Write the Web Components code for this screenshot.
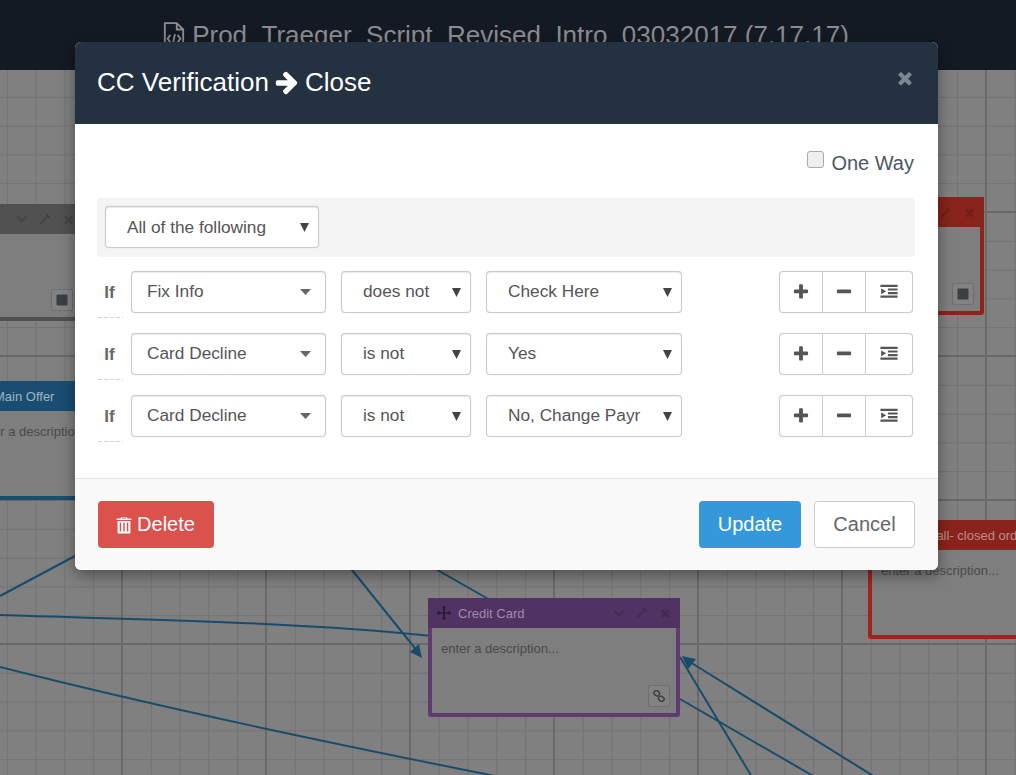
<!DOCTYPE html>
<html>
<head>
<meta charset="utf-8">
<title>Flow editor</title>
<style>
  html, body { margin: 0; height: 100%; overflow: hidden; }
  body { font-family: "Liberation Sans", Arial, sans-serif; }
</style>
</head>
<body>
<flow-app></flow-app>
<script>
const ICONS = {
  plus: 'M1600 736v192q0 40-28 68t-68 28h-416v416q0 40-28 68t-68 28h-192q-40 0-68-28t-28-68v-416h-416q-40 0-68-28t-28-68v-192q0-40 28-68t68-28h416v-416q0-40 28-68t68-28h192q40 0 68 28t28 68v416h416q40 0 68 28t28 68z',
  minus: 'M1600 736v192q0 40-28 68t-68 28h-1216q-40 0-68-28t-28-68v-192q0-40 28-68t68-28h1216q40 0 68 28t28 68z',
  times: 'M1490 1322q0 40-28 68l-136 136q-28 28-68 28t-68-28l-294-294-294 294q-28 28-68 28t-68-28l-136-136q-28-28-28-68t28-68l294-294-294-294q-28-28-28-68t28-68l136-136q28-28 68-28t68 28l294 294 294-294q28-28 68-28t68 28l136 136q28 28 28 68t-28 68l-294 294 294 294q28 28 28 68z',
  arrow: 'M1600 960q0 54-37 91l-651 651q-39 37-91 37-51 0-90-37l-75-75q-38-38-38-91t38-91l293-293h-704q-52 0-84.5-37.5t-32.5-90.5v-128q0-53 32.5-90.5t84.5-37.5h704l-293-294q-38-36-38-90t38-90l75-75q38-38 90-38 53 0 91 38l651 651q37 35 37 90z',
  indent: 'M128 256h1536v192H128zM800 576h864v192H800zM800 896h864v192H800zM128 1216h1536v192H128zM192 576l448 256-448 256z',
  trash: 'M640 192h512l64 128h320q32 0 32 32v96H224v-96q0-32 32-32h320zM736 256l-32 64h384l-32-64zM320 544h1152v1024q0 96-96 96H416q-96 0-96-96zM512 672v800h128V672zM832 672v800h128V672zM1152 672v800h128V672z',
  move: 'M896 64l256 288H992v448h448V640l288 256-288 256V992H992v448h160l-256 288-256-288h160V992H352v160L64 896l288-256v160h448V352H640z'
};

function icon(name, size, color) {
  return `<svg width="${size}" height="${size}" viewBox="0 0 1792 1792" fill="${color}" aria-hidden="true"><path d="${ICONS[name]}"/></svg>`;
}

class FlowSelect extends HTMLElement {
  connectedCallback() {
    const wide = this.hasAttribute('wide');
    this.attachShadow({ mode: 'open' }).innerHTML = `
      <style>
        :host {
          display: flex;
          box-sizing: border-box;
          height: 42px;
          align-items: center;
          background: #fff;
          border: 1px solid #ccc;
          border-radius: 4px;
          box-shadow: inset 0 1px 1px rgba(0,0,0,.08), 0 0 1px rgba(0,0,0,.2);
          color: #555;
          font-size: 17.25px;
          padding-left: ${wide ? 15 : 21}px;
          padding-right: ${wide ? 14 : 9}px;
        }
        .text { flex: 1; white-space: nowrap; overflow: hidden; padding-bottom: var(--lift, 2px); }
        .caret { flex: none; display: block; }
      </style>
      <span class="text"><slot></slot></span>
      ${wide
        ? '<svg class="caret" width="11" height="6" viewBox="0 0 11 6"><path d="M0 0h11L5.5 6z" fill="#666"/></svg>'
        : '<svg class="caret" width="9" height="9" viewBox="0 0 9 9"><path d="M0 0h9L4.5 9z" fill="#444"/></svg>'}
    `;
  }
}

class RuleActions extends HTMLElement {
  connectedCallback() {
    this.attachShadow({ mode: 'open' }).innerHTML = `
      <style>
        :host {
          display: flex;
          box-sizing: border-box;
          height: 42px;
          width: 134px;
          background: #fff;
          border: 1px solid #ccc;
          border-radius: 4px;
          box-shadow: 0 0 1px rgba(0,0,0,.2);
        }
        button {
          all: unset;
          display: flex;
          align-items: center;
          justify-content: center;
          box-sizing: border-box;
          width: 43px;
          border-right: 1px solid #ccc;
        }
        button:first-child { width: 43px; }
        button:last-child { border-right: 0; flex: 1; }
      </style>
      <button>${icon('plus', 18, '#555')}</button>
      <button>${icon('minus', 18, '#555')}</button>
      <button>${icon('indent', 20, '#555')}</button>
    `;
  }
}

class RuleRow extends HTMLElement {
  connectedCallback() {
    this.attachShadow({ mode: 'open' }).innerHTML = `
      <style>
        :host { display: flex; align-items: flex-start; height: 42px; }
        .if {
          flex: none;
          box-sizing: border-box;
          width: 25px;
          height: 47px;
          margin-left: 1px;
          margin-right: 8px;
          padding-top: 12px;
          padding-right: 2px;
          text-align: center;
          font-weight: bold;
          font-size: 17px;
          color: #666;
          background: repeating-linear-gradient(90deg, #d4d4d4 0 4px, transparent 4px 6px) left bottom / 100% 1px no-repeat;
        }
        .subject { width: 195px; }
        .op { width: 130px; margin-left: 15px; }
        .value { width: 196px; margin-left: 15px; }
        rule-actions { margin-left: auto; margin-right: 2px; }
      </style>
      <div class="if">If</div>
      <flow-select class="subject" wide>${this.getAttribute('subject')}</flow-select>
      <flow-select class="op">${this.getAttribute('op')}</flow-select>
      <flow-select class="value">${this.getAttribute('value')}</flow-select>
      <rule-actions></rule-actions>
    `;
  }
}

class RuleModal extends HTMLElement {
  connectedCallback() {
    this.attachShadow({ mode: 'open' }).innerHTML = `
      <style>
        :host {
          position: absolute;
          left: 75px;
          top: 42px;
          width: 863px;
          background: #fff;
          border-radius: 6px;
          box-shadow: 0 5px 15px rgba(0,0,0,.4);
          overflow: hidden;
        }
        header {
          display: flex;
          justify-content: space-between;
          height: 82px;
          box-sizing: border-box;
          padding: 0 23px 0 22px;
          background: #233141;
          color: #fff;
        }
        h4 {
          display: flex;
          align-items: center;
          gap: 5px;
          margin: 0;
          padding-bottom: 2px;
          font-size: 26px;
          font-weight: normal;
        }
        .close { margin-top: 26px; }
        .body { box-sizing: border-box; height: 354px; padding: 26px 23px 0 22px; }
        .oneway {
          display: flex;
          justify-content: flex-end;
          align-items: flex-start;
          gap: 7px;
          height: 48px;
          padding-right: 1px;
          font-size: 20px;
          color: #4d5766;
        }
        .oneway i {
          display: block;
          width: 15px;
          height: 15px;
          margin-top: 1px;
          border: 1px solid #aaa;
          border-radius: 3px;
          background: #efefef;
        }
        .oneway span { margin-top: 2px; }
        .band { background: #f4f4f4; border-radius: 4px; padding: 8px 8px 9px; margin-bottom: 14px; }
        .band flow-select { width: 214px; --lift: 0; }
        rule-row { margin-bottom: 20px; }
        footer {
          display: flex;
          align-items: center;
          box-sizing: border-box;
          height: 92px;
          padding: 0 23px;
          background: #f9f9f9;
          border-top: 1px solid #e3e3e3;
        }
        button {
          all: unset;
          display: flex;
          align-items: center;
          justify-content: center;
          gap: 3px;
          box-sizing: border-box;
          height: 47px;
          border-radius: 4px;
          font-size: 20px;
        }
        .delete { width: 116px; padding-right: 3px; background: #db524d; color: #fff; }
        .update { width: 102px; margin-left: auto; background: #3498db; color: #fff; }
        .cancel { width: 101px; margin-left: 13px; background: #fff; color: #666; border: 1px solid #ccc; }
      </style>
      <header>
        <h4>CC Verification ${icon('arrow', 26, '#fff')} Close</h4>
        <div class="close">${icon('times', 20, '#7b8692')}</div>
      </header>
      <div class="body">
        <div class="oneway"><i></i><span>One Way</span></div>
        <div class="band"><flow-select>All of the following</flow-select></div>
        <rule-row subject="Fix Info" op="does not" value="Check Here"></rule-row>
        <rule-row subject="Card Decline" op="is not" value="Yes"></rule-row>
        <rule-row subject="Card Decline" op="is not" value="No, Change Payr"></rule-row>
      </div>
      <footer>
        <button class="delete">${icon('trash', 20, '#fff')}Delete</button>
        <button class="update">Update</button>
        <button class="cancel">Cancel</button>
      </footer>
    `;
  }
}

// colours on the canvas are the dimmed ones, as seen behind the modal
class FlowNode extends HTMLElement {
  connectedCallback() {
    const foot = this.getAttribute('foot');
    const footIcon = foot === 'link'
      ? '<svg width="12" height="12" viewBox="0 0 13 13" fill="none" stroke="#3a3a3a" stroke-width="1.5"><rect x="1" y="1" width="6" height="5" rx="2" transform="rotate(40 4 3.5)"/><rect x="6" y="7" width="6" height="5" rx="2" transform="rotate(40 9 9.5)"/></svg>'
      : '<svg width="12" height="12" viewBox="0 0 12 12"><rect width="11" height="11" x=".5" y=".5" rx="1" fill="#3b3f44"/></svg>';
    this.attachShadow({ mode: 'open' }).innerHTML = `
      <style>
        :host {
          position: absolute;
          display: flex;
          flex-direction: column;
          box-sizing: border-box;
          border: 4px solid var(--edge);
          border-radius: 3px;
          background: #7e7e7e;
          font-size: 13px;
        }
        .head {
          display: flex;
          align-items: center;
          flex: none;
          height: 26px;
          margin: -4px -4px 0;
          padding: 0 8px;
          border-top: 2px solid var(--head);
          border-bottom: 2px solid var(--head);
          background: var(--head);
          color: var(--title, #a0a0a0);
        }
        .title { flex: 1; display: flex; align-items: center; gap: 6px; white-space: nowrap; }
        .tools { display: flex; align-items: center; gap: 11px; }
        .desc { flex: 1; padding: 13px 9px 0; color: #4a4a4a; white-space: nowrap; overflow: hidden; }
        .foot {
          position: absolute;
          right: 6px;
          bottom: 6px;
          display: flex;
          align-items: center;
          justify-content: center;
          box-sizing: border-box;
          width: 22px;
          height: 22px;
          border: 1px solid #6f6f6f;
          border-radius: 2px;
          background: #828282;
        }
      </style>
      <div class="head">
        <div class="title">${this.hasAttribute('grip') ? icon('move', 16, 'rgba(20,20,40,.75)') : ''}<slot></slot></div>
        <div class="tools">
          <svg width="12" height="8" viewBox="0 0 12 8" fill="none" stroke="rgba(0,0,0,.15)" stroke-width="2"><path d="M1 1l5 5 5-5"/></svg>
          <svg width="12" height="12" viewBox="0 0 12 12" fill="none" stroke="rgba(0,0,0,.15)" stroke-width="2"><path d="M1 11l7-7M8 1v3h3"/></svg>
          ${icon('times', 13, 'rgba(0,0,0,.15)')}
        </div>
      </div>
      <div class="desc">${this.getAttribute('desc') || ''}</div>
      ${foot ? `<div class="foot">${footIcon}</div>` : ''}
    `;
  }
}

class FlowCanvas extends HTMLElement {
  connectedCallback() {
    this.attachShadow({ mode: 'open' }).innerHTML = `
      <style>
        :host {
          display: block;
          position: relative;
          flex: 1;
          overflow: hidden;
          background-color: #808080;
          background-image:
            linear-gradient(90deg, #696969 2px, transparent 2px),
            linear-gradient(#696969 2px, transparent 2px),
            linear-gradient(90deg, #727272 1px, transparent 1px),
            linear-gradient(#727272 1px, transparent 1px);
          background-size: 144px 144px, 144px 144px, 28.8px 28.8px, 28.8px 28.8px;
          background-position: 121px 0, 0 141px, 6.8px 0, 0 26.8px;
        }
        svg.edges { position: absolute; left: 0; top: -70px; }
        path { fill: none; stroke: #194c6b; stroke-width: 2; }
        polygon { fill: #194c6b; }
      </style>
      <svg class="edges" width="1016" height="775">
        <path d="M0 596L120 532"/>
        <path d="M0 615C150 620 300 622 432 636"/>
        <path d="M340 555L418 652"/>
        <polygon points="422,658 410,652 419,644"/>
        <path d="M0 667C170 710 340 745 500 777"/>
        <path d="M420 560L490 600"/>
        <path d="M875 777L690 662" stroke-width="2.4"/>
        <polygon points="682,656 696,659 688,669"/>
        <path d="M680 657L752 777"/>
        <path d="M680 699L815 777"/>
      </svg>
      <flow-node style="left:-130px;top:134px;width:213px;height:117px;--edge:#515151;--head:#515151;" foot="stop"></flow-node>
      <flow-node style="left:-38px;top:311px;width:340px;height:119px;--edge:#194e72;--head:#194e72;--title:#9db4c4;" desc="enter a description..."><span style="margin-left:24px">Main Offer</span></flow-node>
      <flow-node style="left:700px;top:127px;width:284px;height:118px;--edge:#8f221b;--head:#88241b;" foot="stop"></flow-node>
      <flow-node style="left:868px;top:450px;width:300px;height:119px;--edge:#a1241d;--head:#88241b;--title:#bf8d88;" desc="enter a description..."><span style="margin-left:51px">Call- closed order</span></flow-node>
      <flow-node grip style="left:428px;top:528px;width:252px;height:119px;--edge:#5f3b72;--head:#503363;--title:#a08aac;" desc="enter a description..." foot="link">Credit Card</flow-node>
    `;
  }
}

class FlowTopbar extends HTMLElement {
  connectedCallback() {
    this.attachShadow({ mode: 'open' }).innerHTML = `
      <style>
        :host {
          display: flex;
          flex: none;
          justify-content: center;
          gap: 7px;
          box-sizing: border-box;
          height: 70px;
          padding: 20px 4px 0 0;
          background: #141a23;
          color: #8a8c8e;
          font-size: 26px;
          white-space: nowrap;
        }
      </style>
      <svg width="22" height="30" viewBox="0 0 24 30" fill="none" stroke="#8a8c8e" stroke-width="2">
        <path d="M2 2h13l7 7v20H2zM15 2v7h7"/>
        <path d="M8 15l-3 4 3 4M16 15l3 4-3 4M13 14l-2 10"/>
      </svg>
      <span>Prod_Traeger_Script_Revised_Intro_03032017 (7.17.17)</span>
    `;
  }
}

class FlowApp extends HTMLElement {
  connectedCallback() {
    this.attachShadow({ mode: 'open' }).innerHTML = `
      <style>
        :host {
          display: flex;
          flex-direction: column;
          position: relative;
          height: 100vh;
          overflow: hidden;
          font-family: "Liberation Sans", Arial, sans-serif;
        }
      </style>
      <flow-topbar></flow-topbar>
      <flow-canvas></flow-canvas>
      <rule-modal></rule-modal>
    `;
  }
}

customElements.define('flow-select', FlowSelect);
customElements.define('rule-actions', RuleActions);
customElements.define('rule-row', RuleRow);
customElements.define('rule-modal', RuleModal);
customElements.define('flow-node', FlowNode);
customElements.define('flow-canvas', FlowCanvas);
customElements.define('flow-topbar', FlowTopbar);
customElements.define('flow-app', FlowApp);
</script>
</body>
</html>
